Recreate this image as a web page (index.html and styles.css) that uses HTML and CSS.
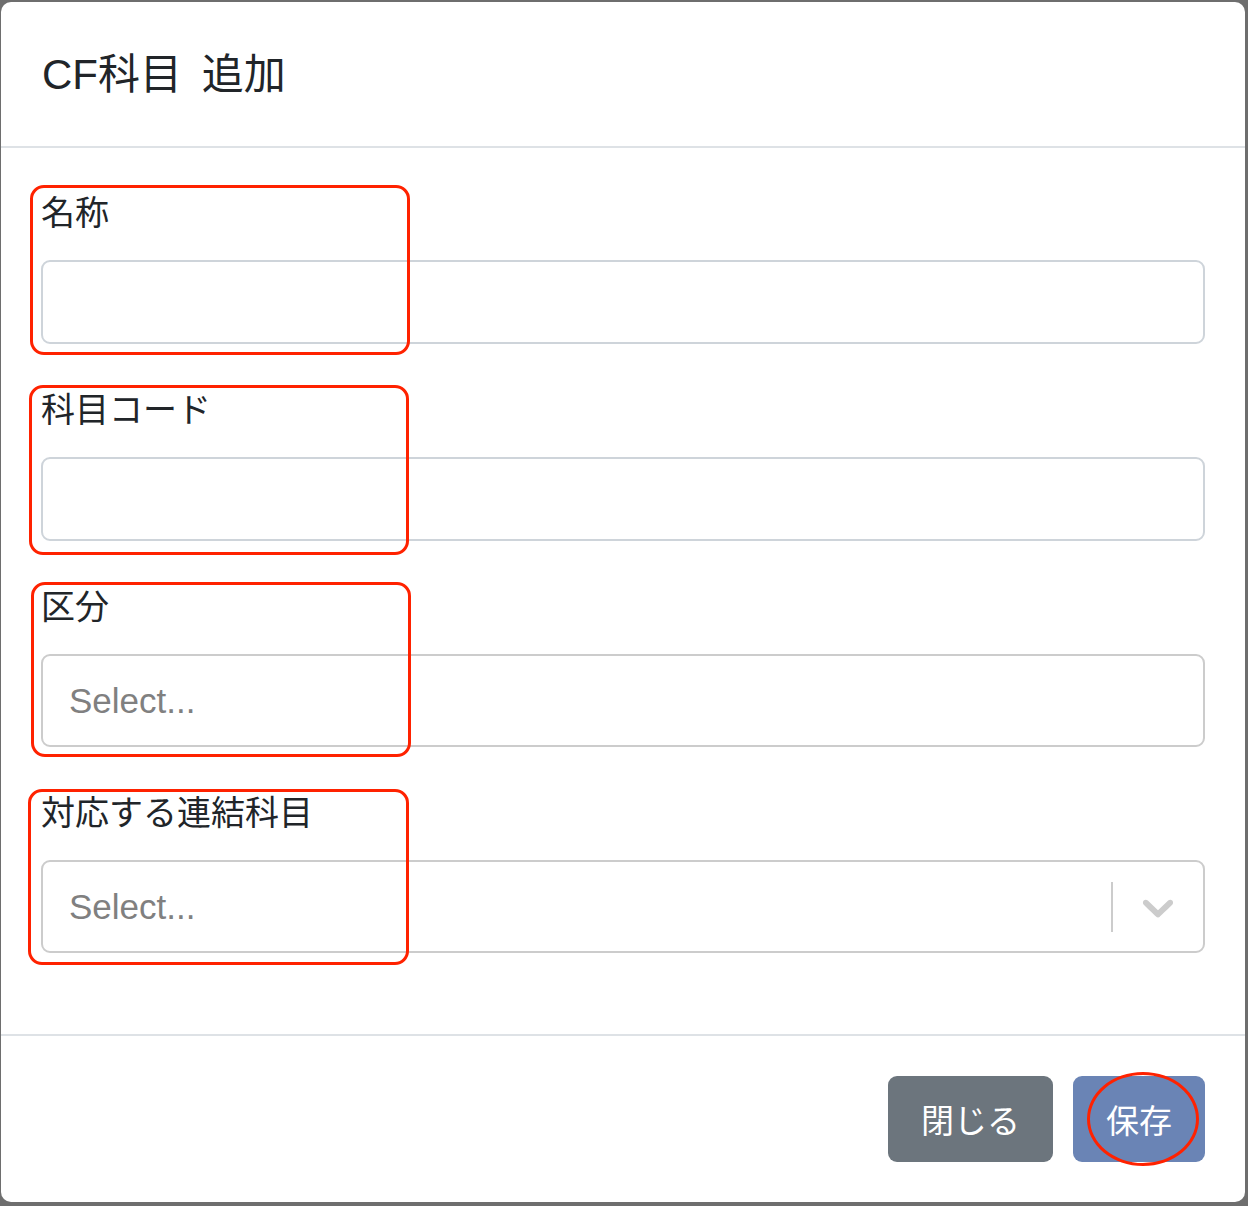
FILE: index.html
```html
<!DOCTYPE html>
<html lang="ja">
<head>
    <meta charset="UTF-8">
    <meta name="viewport" content="width=device-width, initial-scale=1.0">
    <title>CF科目 追加</title>
    <link rel="stylesheet" href="styles.css">
</head>
<body>
    <div class="modal">
        <!-- Header -->
        <div class="modal-header">
            <h5 class="modal-title">CF科目 追加</h5>
        </div>

        <!-- Form -->
        <div class="modal-body">
            <div class="form-group">
                <label>名称</label>
                <input class="form-control" type="text">
                <span class="mark mark-1"></span>
            </div>

            <div class="form-group">
                <label>科目コード</label>
                <input class="form-control" type="text">
                <span class="mark mark-2"></span>
            </div>

            <div class="form-group">
                <label>区分</label>
                <div class="select">
                    <div class="select-value">Select...</div>
                </div>
                <span class="mark mark-3"></span>
            </div>

            <div class="form-group">
                <label>対応する連結科目</label>
                <div class="select">
                    <div class="select-value">Select...</div>
                    <div class="select-indicators">
                        <span class="select-separator"></span>
                        <svg class="select-arrow" viewBox="0 0 20 20" width="52" height="52">
                            <path d="M4.516 7.548c0.436-0.446 1.043-0.481 1.576 0l3.908 3.747 3.908-3.747c0.533-0.481 1.141-0.446 1.574 0 0.436 0.445 0.408 1.197 0 1.615-0.406 0.418-4.695 4.502-4.695 4.502-0.217 0.223-0.502 0.335-0.787 0.335s-0.57-0.112-0.789-0.335c0 0-4.287-4.084-4.695-4.502s-0.436-1.17 0-1.615z"></path>
                        </svg>
                    </div>
                </div>
                <span class="mark mark-4"></span>
            </div>
        </div>

        <!-- Footer -->
        <div class="modal-footer">
            <button class="btn btn-secondary">閉じる</button>
            <button class="btn btn-primary">保存<span class="mark-circle"></span></button>
        </div>
    </div>
</body>
</html>
```

FILE: styles.css
```css
body {
    margin: 0;
    background-color: #6e6e6e;
    font-family: "Liberation Sans", "Noto Sans CJK JP", sans-serif;
    color: #212529;
}
.modal {
    margin: 2px 3px 0 1px;
    background-color: #fff;
    border-radius: 10px;
    overflow: hidden;
}
.modal-header {
    padding: 48px 41px 47px;
    border-bottom: 2px solid #dee2e6;
}
.modal-title {
    margin: 0;
    font-size: 42px;
    font-weight: normal;
    line-height: 49px;
    word-spacing: 8px;
}
.modal-body {
    padding: 40px 40px;
}
.form-group {
    position: relative;
    margin-bottom: 41px;
}
.form-group label {
    display: block;
    font-size: 34px;
    line-height: 50px;
    margin-bottom: 22px;
}
.form-control {
    display: block;
    box-sizing: border-box;
    width: 100%;
    height: 84px;
    margin: 0;
    border: 2px solid #ced4da;
    border-radius: 9px;
    background-color: #fff;
}
.select {
    display: flex;
    align-items: center;
    box-sizing: border-box;
    height: 93px;
    border: 2px solid #cccccc;
    border-radius: 9px;
    background-color: #fff;
}
.select-value {
    flex: 1;
    padding-left: 26px;
    font-size: 35px;
    color: #808080;
}
.select-indicators {
    display: flex;
    align-items: center;
    padding-right: 19px;
}
.select-separator {
    width: 2px;
    height: 50px;
    background-color: #cccccc;
    margin-right: 19px;
}
.select-arrow {
    fill: #cccccc;
    display: block;
}
.modal-footer {
    display: flex;
    justify-content: flex-end;
    gap: 20px;
    padding: 40px 40px;
    border-top: 2px solid #dee2e6;
}
.btn {
    position: relative;
    height: 86px;
    padding: 0 33px;
    border: none;
    border-radius: 9px;
    font-family: "Liberation Sans", "Noto Sans CJK JP", sans-serif;
    font-size: 33px;
    color: #fff;
}
.btn-secondary {
    background-color: #6c757d;
}
.btn-primary {
    background-color: #6a84b5;
}

/* red annotation marks */
.mark {
    position: absolute;
    box-sizing: border-box;
    border: 3px solid #ff2200;
    border-radius: 14px;
    pointer-events: none;
}
.mark-1 { left: -11px; top: -3px; width: 380px; height: 170px; }
.mark-2 { left: -12px; top: 0; width: 380px; height: 170px; }
.mark-3 { left: -10px; top: 0; width: 380px; height: 175px; }
.mark-4 { left: -13px; top: 1px; width: 381px; height: 176px; }
.mark-circle {
    position: absolute;
    left: 14px;
    top: -4px;
    width: 112px;
    height: 94px;
    box-sizing: border-box;
    border: 3px solid #ff2200;
    border-radius: 50%;
}
```
